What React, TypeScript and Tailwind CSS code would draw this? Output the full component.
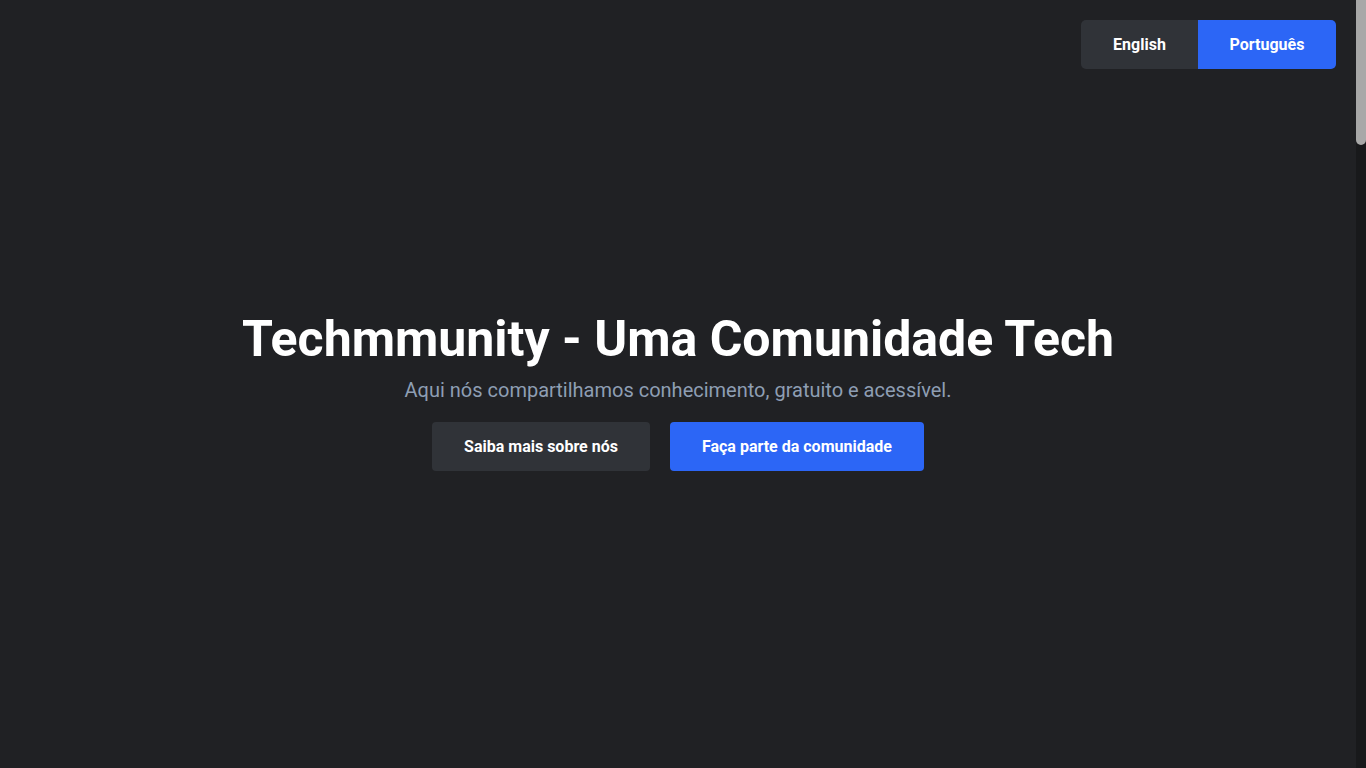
function LanguageSwitch() {
    return (
        <div className="absolute top-5 right-5 flex rounded-[5px] overflow-hidden">
            <button className="h-[49px] w-[117px] bg-[#303338] text-white text-base font-bold">English</button>
            <button className="h-[49px] w-[138px] bg-[#2c66f6] text-white text-base font-bold">Português</button>
        </div>
    )
}

// page scrollbar as seen in the shot (dark track, light thumb at the top)
function ScrollBar() {
    return (
        <div className="w-[10px] h-screen shrink-0 bg-[#18191b]">
            <div className="h-[145px] w-full rounded-b-[5px] bg-[#a8a8a8]"></div>
        </div>
    )
}

export default function App() {
    return (
        <div className="h-screen overflow-hidden flex bg-[#202124] text-white font-['Roboto','Liberation_Sans',sans-serif]">
            <div className="relative flex-1">
                <LanguageSwitch />

                {/* Hero */}
                <section className="h-screen flex flex-col items-center justify-center pt-4">
                    <h1 className="text-[50px] leading-[50px] font-bold text-white">Techmmunity - Uma Comunidade Tech</h1>
                    <p className="mt-3 text-xl leading-7 text-[#8e9eb3]">
                        Aqui nós compartilhamos conhecimento, gratuito e acessível.
                    </p>
                    <div className="mt-[18px] flex gap-5">
                        <button className="h-[49px] px-8 pt-px rounded-[4px] bg-[#303338] text-white text-base font-bold">
                            Saiba mais sobre nós
                        </button>
                        <button className="h-[49px] px-8 pt-px rounded-[4px] bg-[#2c66f6] text-white text-base font-bold">
                            Faça parte da comunidade
                        </button>
                    </div>
                </section>
            </div>
            <ScrollBar />
        </div>
    )
}
